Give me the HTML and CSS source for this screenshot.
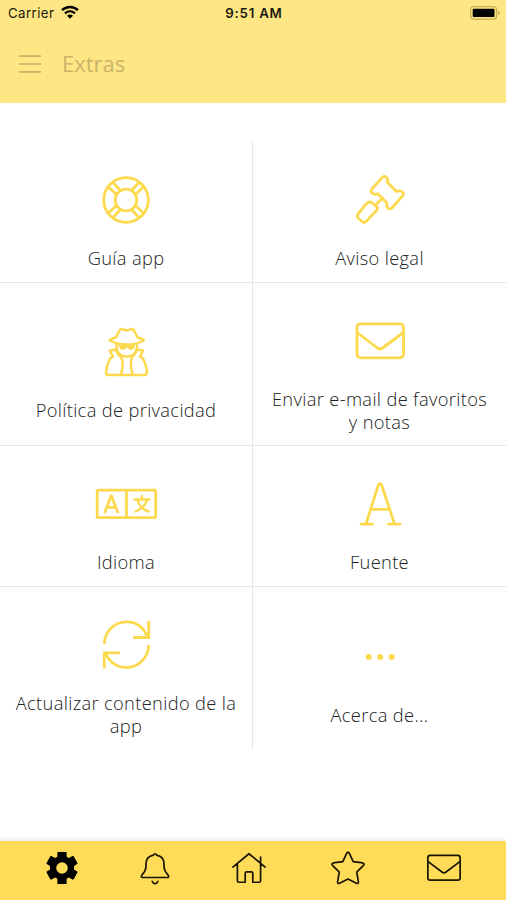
FILE: index.html
```
<!DOCTYPE html>
<html lang="es">
<head>
  <meta charset="UTF-8" />
  <meta name="viewport" content="width=device-width, initial-scale=1.0"/>
  <title>Extras</title>
  <link rel="stylesheet" href="styles.css">
</head>
<body>
  <header class="header">
    <div class="status">
      <div class="carrier">
        <span>Carrier</span>
        <svg class="wifi" width="20" height="14" viewBox="0 0 20 14">
          <path d="M2 5.2C6.500 .9 13.500 .9 18 5.200M5 8.400c2.900-2.700 7.100-2.700 10 0" fill="none" stroke="#000" stroke-width="2.300"/>
          <path d="M7 10.700c1.800-1.500 4.200-1.500 6 0l-3 3z"/>
        </svg>
      </div>
      <span class="time">9:51 AM</span>
      <svg class="battery" width="30" height="14" viewBox="0 0 30 14">
        <rect x=".6" y=".6" width="26" height="12.500" rx="3" fill="none" stroke="#c4ae58" stroke-width="1.200"/>
        <rect x="2.700" y="2.700" width="21.800" height="8.300" rx="1"/>
        <path d="M28 4.500q3 2.300 0 4.600z" fill="#b9a34c"/>
      </svg>
    </div>
    <div class="title-bar">
      <svg class="menu" width="22" height="18" viewBox="0 0 22 18">
        <path d="M0 1.200h22M0 9h22M0 16.800h22"/>
      </svg>
      <h1>Extras</h1>
    </div>
  </header>

  <main class="grid">
    <a class="cell">
      <svg class="icon" viewBox="0 0 92 92">
        <circle cx="46" cy="46" r="22.300"/>
        <circle cx="46" cy="46" r="10.800"/>
        <path d="M28.500 33l8.300 7.700M33 28.500l7.700 8.300M59 28.500l-7.700 8.300M63.500 33l-8.300 7.700M28.500 59l8.300-7.700M33 63.500l7.700-8.300M59 63.500l-7.700-8.300M63.500 59l-8.300-7.700"/>
      </svg>
      <span>Guía app</span>
    </a>
    <a class="cell">
      <svg class="icon" viewBox="0 0 92 92">
        <path d="M48.300 23.500L37.500 35.500Q36 38 39 39.500Q41 41 43.800 39.700L52.800 48.800Q52 52 54 54Q56 56 58.300 53.500L68.500 42Q70.500 39.500 68.500 38Q66 36 62.500 37.500L53.300 28.200Q54.500 25.500 53 24Q50.500 21 48.300 23.500Z"/>
        <path d="M48.500 44L41.500 51"/>
        <path d="M32.500 49.700L24 60Q22.500 62.500 24.500 64.500L28 67.500Q30.500 69.500 32.500 67L42.500 56.500Q44.500 54.500 42.500 52.500L37.500 48.500Q34.700 47 32.500 49.700Z"/>
      </svg>
      <span>Aviso legal</span>
    </a>
    <a class="cell">
      <svg class="icon spy" viewBox="0 0 92 92">
        <path d="M36 31.500L39 25.500Q40.500 22 43.500 23.500Q47 25 50 23.500Q53 22 54.500 25.500L57.500 31.500Q62 32.500 64 34.500Q56 38.500 46.500 38.500Q37 38.500 29.500 34.500Q31.500 32.500 36 31.500Z"/>
        <path d="M36.500 38Q36 50.500 46.800 50.500Q57.500 50.500 57 38"/>
        <path class="solid" d="M38.500 39h16.500q-.4 4.800-4.200 4.800q-3 0-4-3q-1 3-4 3q-3.800 0-4.300-4.800z"/>
        <path d="M35.500 43.500L29.700 44.700L33 50.500L30 52.500Q26.500 59 26 66Q26 69 28.500 69H64.500Q67 69 67 66Q66.500 59 63 52.500L60 50.500L63 44.700L57.500 43.500L53.500 49.500Q50.500 53 51 58Q50.500 62 53 69M35.500 43.500L38.500 48.500Q43.500 53 42.500 58Q43 62 40.500 69"/>
      </svg>
      <span>Política de privacidad</span>
    </a>
    <a class="cell">
      <svg class="icon" viewBox="0 0 92 92">
        <rect x="23" y="28.800" width="46.500" height="34" rx="3.500"/>
        <path d="M23 37.500L43.500 53Q46 54.800 48.500 53L69.500 37.500"/>
      </svg>
      <span>Enviar e-mail de favoritos y&nbsp;notas</span>
    </a>
    <a class="cell">
      <svg class="icon" viewBox="0 0 92 92">
        <rect x="17.200" y="32.200" width="58.500" height="27.500" rx="1"/>
        <path d="M46.500 32.500v27"/>
        <path d="M25 54L31.300 37.500L37.700 54M27.500 49.300h8"/>
        <path class="thin" d="M54.500 41.500h15M62 38v3.500M67 42Q65 49.500 55.500 53.500M57.500 42.500Q60 50.500 68.500 53.500"/>
      </svg>
      <span>Idioma</span>
    </a>
    <a class="cell">
      <svg class="icon" viewBox="0 0 92 92">
        <path d="M32 66L44 28Q46 23.500 48 28L60.500 66M36.800 51.300h19M27 66.200h11.500M54.500 66.200h11.500"/>
      </svg>
      <span>Fuente</span>
    </a>
    <a class="cell">
      <svg class="icon sync" viewBox="0 0 92 92">
        <path d="M24.300 45C24.500 33 34 22.800 46.500 22.800C56 22.800 63.500 28 67 37.500M68.700 22v16.500H53M68.700 46C68.500 58 59 68.500 46.500 68.500C37 68.500 29.500 63 25.500 54M24.300 69.500V53.800H40"/>
      </svg>
      <span>Actualizar contenido de la app</span>
    </a>
    <a class="cell">
      <svg class="icon dots" viewBox="0 0 92 92">
        <circle cx="34.700" cy="46" r="3"/>
        <circle cx="46.200" cy="46" r="3"/>
        <circle cx="57.700" cy="46" r="3"/>
      </svg>
      <span>Acerca de...</span>
    </a>
  </main>

  <nav class="tabs">
    <svg viewBox="0 0 40 40">
      <path class="gear" fill-rule="evenodd" d="M16 4h8v4.700l3.200 1.900 4.300-2.400 4 6.900-3.700 2.400v4.500l3.700 2.400-4 6.900-4.300-2.400-3.200 1.900V36h-8v-5.200l-3.200-1.900-4.300 2.400-4-6.900 3.700-2.400v-4.500L4.500 15.100l4-6.900 4.300 2.400L16 8.700zM20 13a7 7 0 1 0 0 14a7 7 0 1 0 0-14z"/>
    </svg>
    <svg viewBox="0 0 40 40">
      <path d="M18.300 6.500Q20 3.500 21.700 6.500Q29.300 8 29.500 15.500V19Q29.800 23.500 33.500 27Q35.500 30 33 30H7Q4.500 30 6.500 27Q10.200 23.500 10.500 19V15.500Q10.700 8 18.300 6.500ZM17 34Q18 36.500 20 36.500Q22 36.500 23 34"/>
    </svg>
    <svg viewBox="0 0 40 40">
      <path d="M3 19L20 5L37 19M7.800 16V33.500Q7.800 35 9.300 35H16V25.500Q16 24 17.500 24H22.500Q24 24 24 25.500V35H30.700Q32.200 35 32.200 33.500V16M32.200 14V8.500"/>
    </svg>
    <svg viewBox="0 0 40 40">
      <path d="M18.600 4.500Q20 2 21.400 4.500L25.500 13.200L35.500 14.700Q38 15.500 36.300 17.200L29.200 24.300L31 34.500Q31 37 28.800 36L20 31.500L11.200 36Q9 37 9 34.500L10.800 24.300L3.700 17.200Q2 15.500 4.500 14.700L14.500 13.200Z"/>
    </svg>
    <svg viewBox="0 0 40 40">
      <rect x="3" y="6.700" width="34" height="26" rx="2.500"/>
      <path d="M3 13L18.200 24.500Q20 25.800 21.800 24.500L37 13"/>
    </svg>
  </nav>
</body>
</html>
```
FILE: styles.css
```
* {
  box-sizing: border-box;
}
body {
  margin: 0;
  height: 900px;
  display: flex;
  flex-direction: column;
  background: #fff;
  font-family: 'Open Sans', 'Noto Sans', sans-serif;
  overflow: hidden;
}
.header {
  height: 102.500px;
  background: #fee685;
}
.status {
  height: 26px;
  padding: 0 6px 0 8px;
  display: grid;
  grid-template-columns: 1fr auto 1fr;
  align-items: center;
  font-family: Inter, sans-serif;
  font-size: 13.300px;
  color: #1d1a10;
}
.carrier {
  display: flex;
  align-items: center;
  gap: 6px;
  letter-spacing: 0.400px;
}
.wifi {
  margin-top: -2px;
}
.time {
  font-weight: 600;
  letter-spacing: 0.750px;
}
.battery {
  justify-self: end;
}
.title-bar {
  display: flex;
  align-items: center;
  gap: 21px;
  height: 75px;
  padding-left: 19px;
}
.menu {
  fill: none;
  stroke: #c9b468;
  stroke-width: 1.700;
}
h1 {
  margin: -2px 0 0;
  font-size: 22px;
  font-weight: 400;
  color: #c9b468;
}
.grid {
  display: grid;
  grid-template-columns: 253px 253px;
  grid-template-rows: 141px 163px 141px 162.500px;
  margin-top: 39.500px;
}
.cell {
  display: flex;
  flex-direction: column;
  align-items: center;
  justify-content: center;
  padding: 0 14px;
  border-right: 1px solid #e6e6e6;
  border-bottom: 1px solid #e6e6e6;
  font-size: 18.300px;
  font-weight: 330;
  letter-spacing: 0.340px;
  line-height: 23.500px;
  text-align: center;
  color: #222;
}
.cell:nth-child(even) {
  border-right: 0;
}
.cell:nth-last-child(-n+2) {
  border-bottom: 0;
}
.icon {
  width: 92px;
  height: 92px;
  flex: none;
  fill: none;
  stroke: #fdd94f;
  stroke-width: 2.800;
  stroke-linecap: round;
  stroke-linejoin: round;
}
.spy {
  stroke-width: 2.500;
}
.sync {
  stroke-linecap: butt;
  stroke-linejoin: miter;
}
.icon .thin {
  stroke-width: 2.400;
}
.icon .solid,
.dots {
  fill: #fdd94f;
  stroke: none;
}
.tabs {
  height: 59.500px;
  margin-top: auto;
  padding: 0 0 5px 15.500px;
  display: grid;
  grid-template-columns: 93px 93px 95px 103px 89px;
  align-items: center;
  justify-items: center;
  background: #ffdc57;
  box-shadow: 0 -1px 4px rgba(0, 0, 0, 0.120);
}
.tabs svg {
  width: 38px;
  height: 38px;
  fill: none;
  stroke: #1a1503;
  stroke-width: 1.800;
  stroke-linecap: round;
  stroke-linejoin: round;
}
.tabs .gear {
  fill: #000;
  stroke: #000;
}
```
